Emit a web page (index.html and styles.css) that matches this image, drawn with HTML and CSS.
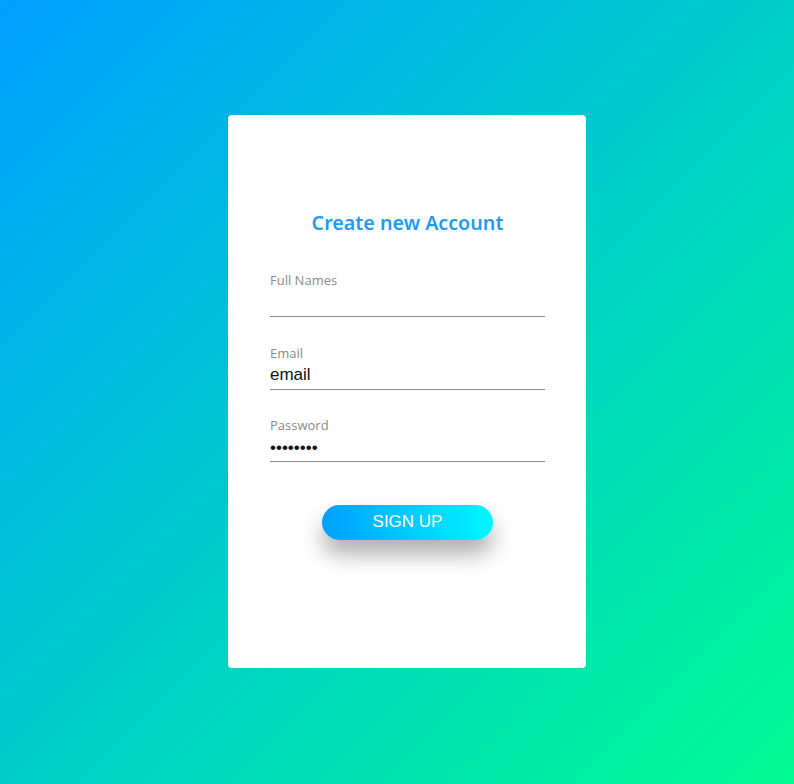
FILE: index.html
```html
<!DOCTYPE html>
<html>
<head>
<meta charset="utf-8">
<link rel="stylesheet" href="styles.css">
</head>
<body>
<main class="page">
  <form class="card">
    <h1 class="title">Create new Account</h1>
    <label class="field">
      <span class="label">Full Names</span>
      <input class="input" type="text" value="">
    </label>
    <label class="field">
      <span class="label">Email</span>
      <input class="input" type="text" value="email">
    </label>
    <label class="field">
      <span class="label">Password</span>
      <input class="input" type="password" value="12345678">
    </label>
    <div class="actions">
      <button class="btn" type="button">SIGN UP</button>
    </div>
  </form>
</main>
</body>
</html>
```

FILE: styles.css
```css
html, body {
  margin: 0;
  padding: 0;
  height: 100%;
}
body {
  background: linear-gradient(135deg, #00a0ff 0%, #00fb93 100%);
  font-family: "Open Sans", "Noto Sans", sans-serif;
}
.page {
  height: 784px;
  display: flex;
  align-items: center;
  justify-content: center;
  padding-left: 20px;
  padding-bottom: 1px;
  box-sizing: border-box;
}
.card {
  width: 358px;
  height: 553px;
  box-sizing: border-box;
  background: #fff;
  border-radius: 4px;
  padding: 93px 41px 0 42px;
  display: flex;
  flex-direction: column;
}
.title {
  margin: 0 0 33px;
  text-align: center;
  color: #1f9bf2;
  font-family: "Noto Sans", "Open Sans", sans-serif;
  font-weight: 600;
  font-size: 19.7px;
  line-height: 30px;
}
.field {
  display: flex;
  flex-direction: column;
  margin-bottom: 26.5px;
}
.label {
  color: #8a8a8a;
  font-size: 13px;
  line-height: 18px;
}
.input {
  border: none;
  border-bottom: 1px solid #8a8a8a;
  outline: none;
  padding: 0;
  height: 27px;
  font-family: "Liberation Sans", Arial, sans-serif;
  font-size: 17px;
  color: #111;
  background: transparent;
}
.actions {
  display: flex;
  justify-content: center;
  margin-top: 16px;
}
.btn {
  width: 171px;
  height: 35px;
  border: none;
  border-radius: 18px;
  background: linear-gradient(90deg, #009fff 0%, #00f7ff 100%);
  color: #fff;
  font-family: "Liberation Sans", Arial, sans-serif;
  font-size: 17px;
  box-shadow: 0 14px 22px rgba(0, 0, 0, 0.32);
  cursor: pointer;
}
```
